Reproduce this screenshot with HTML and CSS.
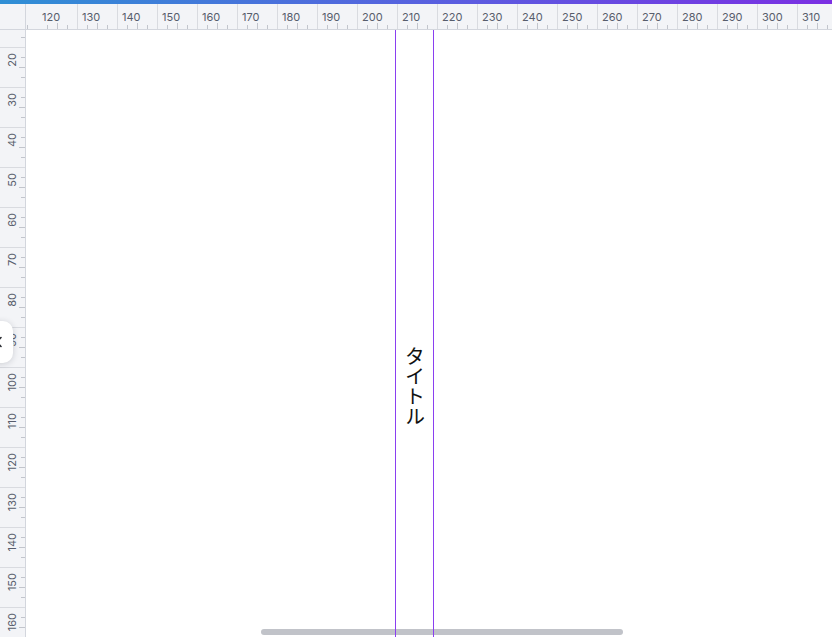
FILE: index.html
```html
<!DOCTYPE html>
<html lang="ja">
<head>
<meta charset="utf-8">
<title>Editor</title>
<link rel="stylesheet" href="styles.css">
</head>
<body>
<div class="topbar"></div>
<div class="hruler-row">
  <div class="corner"></div>
  <div class="hruler">
    <div class="hruler-track">
      <div class="hcell"></div>
      <div class="hcell nomark"><span>120</span></div>
      <div class="hcell"><span>130</span></div>
      <div class="hcell"><span>140</span></div>
      <div class="hcell"><span>150</span></div>
      <div class="hcell"><span>160</span></div>
      <div class="hcell"><span>170</span></div>
      <div class="hcell"><span>180</span></div>
      <div class="hcell"><span>190</span></div>
      <div class="hcell"><span>200</span></div>
      <div class="hcell"><span>210</span></div>
      <div class="hcell"><span>220</span></div>
      <div class="hcell"><span>230</span></div>
      <div class="hcell"><span>240</span></div>
      <div class="hcell"><span>250</span></div>
      <div class="hcell"><span>260</span></div>
      <div class="hcell"><span>270</span></div>
      <div class="hcell"><span>280</span></div>
      <div class="hcell"><span>290</span></div>
      <div class="hcell"><span>300</span></div>
      <div class="hcell"><span>310</span></div>
    </div>
  </div>
</div>
<div class="main">
  <div class="vruler">
    <div class="vruler-track">
      <div class="vcell"></div>
      <div class="vcell"><span>20</span></div>
      <div class="vcell"><span>30</span></div>
      <div class="vcell"><span>40</span></div>
      <div class="vcell"><span>50</span></div>
      <div class="vcell"><span>60</span></div>
      <div class="vcell"><span>70</span></div>
      <div class="vcell"><span>80</span></div>
      <div class="vcell"><span>90</span></div>
      <div class="vcell"><span>100</span></div>
      <div class="vcell"><span>110</span></div>
      <div class="vcell"><span>120</span></div>
      <div class="vcell"><span>130</span></div>
      <div class="vcell"><span>140</span></div>
      <div class="vcell"><span>150</span></div>
      <div class="vcell"><span>160</span></div>
    </div>
  </div>
  <div class="canvas">
    <div class="scrollbar"></div>
    <div class="textframe"><span class="vtext">タイトル</span></div>
  </div>
</div>
<button class="collapse" aria-label="閉じる">
  <svg width="10" height="12" viewBox="0 0 10 12"><path d="M7 1.5 L2.5 6 L7 10.5" fill="none" stroke="#2b2d33" stroke-width="1.6" stroke-linecap="round" stroke-linejoin="round"/></svg>
</button>
</body>
</html>
```

FILE: styles.css
```css
html, body {
  margin: 0;
  padding: 0;
  overflow: hidden;
}
body {
  width: 832px;
  height: 637px;
  display: flex;
  flex-direction: column;
  font-family: Inter, "Noto Sans", sans-serif;
  background: #ffffff;
  position: relative;
}
.topbar {
  flex: none;
  height: 4px;
  background: linear-gradient(90deg, #2f8fd5, #5b5de0 55%, #7b2fe3);
}
.hruler-row {
  flex: none;
  display: flex;
  height: 25px;
  border-bottom: 1px solid #d3d6dd;
  background: #f3f4f7;
}
.corner {
  flex: none;
  width: 25px;
  border-right: 1px solid #d3d6dd;
}
.hruler {
  flex: 1;
  overflow: hidden;
}
.hruler-track {
  display: flex;
  margin-left: -29px;
}
.hcell {
  flex: none;
  width: 40px;
  height: 25px;
  box-sizing: border-box;
  border-left: 1px solid #d9dbe0;
  padding: 8px 0 0 4px;
  font-size: 11px;
  line-height: 11px;
  color: #575d6c;
  background-image: linear-gradient(#c2c5cc, #c2c5cc), linear-gradient(#c2c5cc, #c2c5cc), linear-gradient(#c2c5cc, #c2c5cc);
  background-size: 1px 4px, 1px 6px, 1px 4px;
  background-position: 10px 100%, 20px 100%, 30px 100%;
  background-repeat: no-repeat;
  background-origin: border-box;
}
.hcell.nomark {
  border-left-color: transparent;
}
.main {
  flex: 1;
  display: flex;
  min-height: 0;
}
.vruler {
  flex: none;
  width: 25px;
  border-right: 1px solid #d3d6dd;
  background: #f3f4f7;
  overflow: hidden;
}
.vruler-track {
  margin-top: -23px;
}
.vcell {
  height: 40px;
  box-sizing: border-box;
  border-top: 1px solid #d9dbe0;
  padding: 5px 0 0 7px;
  font-size: 11px;
  line-height: 11px;
  color: #575d6c;
  background-image: linear-gradient(#c2c5cc, #c2c5cc), linear-gradient(#c2c5cc, #c2c5cc), linear-gradient(#c2c5cc, #c2c5cc);
  background-size: 4px 1px, 6px 1px, 4px 1px;
  background-position: 100% 10px, 100% 20px, 100% 30px;
  background-repeat: no-repeat;
  background-origin: border-box;
}
.vcell span {
  display: inline-block;
  writing-mode: vertical-rl;
  transform: rotate(180deg);
}
.canvas {
  flex: 1;
  position: relative;
  background: #ffffff;
}
.scrollbar {
  position: absolute;
  left: 235px;
  top: 599px;
  width: 362px;
  height: 6px;
  border-radius: 3px;
  background: #c1c3c9;
}
.textframe {
  position: absolute;
  left: 369px;
  top: 0;
  bottom: 0;
  width: 37px;
  border-left: 1px solid #8a3ff0;
  border-right: 1px solid #8a3ff0;
  display: flex;
  justify-content: center;
  align-items: flex-start;
  padding-top: 316px;
  box-sizing: content-box;
}
.vtext {
  writing-mode: vertical-rl;
  font-family: "Noto Sans CJK JP", sans-serif;
  font-size: 20px;
  line-height: 20px;
  color: #111111;
}
.collapse {
  position: absolute;
  left: -15px;
  top: 321px;
  width: 28px;
  height: 42px;
  padding: 0;
  border: none;
  border-radius: 10px;
  background: #ffffff;
  box-shadow: 0 1px 6px rgba(30, 35, 50, 0.18);
  display: flex;
  align-items: center;
  justify-content: center;
}
```
